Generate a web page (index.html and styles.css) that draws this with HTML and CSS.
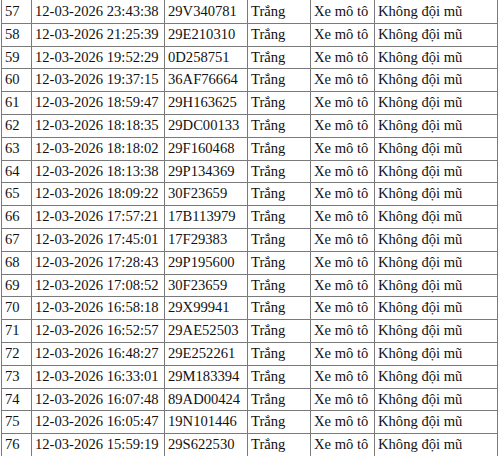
FILE: index.html
```html
<!DOCTYPE html>
<html lang="vi">
<head>
<meta charset="utf-8">
<link rel="stylesheet" href="styles.css">
</head>
<body>
<table class="list">
<colgroup>
<col class="c-no"><col class="c-time"><col class="c-plate"><col class="c-color"><col class="c-type"><col class="c-err">
</colgroup>
<tbody>
<tr><td>57</td><td>12-03-2026 23:43:38</td><td>29V340781</td><td>Trắng</td><td>Xe mô tô</td><td>Không đội mũ</td></tr>
<tr><td>58</td><td>12-03-2026 21:25:39</td><td>29E210310</td><td>Trắng</td><td>Xe mô tô</td><td>Không đội mũ</td></tr>
<tr><td>59</td><td>12-03-2026 19:52:29</td><td>0D258751</td><td>Trắng</td><td>Xe mô tô</td><td>Không đội mũ</td></tr>
<tr><td>60</td><td>12-03-2026 19:37:15</td><td>36AF76664</td><td>Trắng</td><td>Xe mô tô</td><td>Không đội mũ</td></tr>
<tr><td>61</td><td>12-03-2026 18:59:47</td><td>29H163625</td><td>Trắng</td><td>Xe mô tô</td><td>Không đội mũ</td></tr>
<tr><td>62</td><td>12-03-2026 18:18:35</td><td>29DC00133</td><td>Trắng</td><td>Xe mô tô</td><td>Không đội mũ</td></tr>
<tr><td>63</td><td>12-03-2026 18:18:02</td><td>29F160468</td><td>Trắng</td><td>Xe mô tô</td><td>Không đội mũ</td></tr>
<tr><td>64</td><td>12-03-2026 18:13:38</td><td>29P134369</td><td>Trắng</td><td>Xe mô tô</td><td>Không đội mũ</td></tr>
<tr><td>65</td><td>12-03-2026 18:09:22</td><td>30F23659</td><td>Trắng</td><td>Xe mô tô</td><td>Không đội mũ</td></tr>
<tr><td>66</td><td>12-03-2026 17:57:21</td><td>17B113979</td><td>Trắng</td><td>Xe mô tô</td><td>Không đội mũ</td></tr>
<tr><td>67</td><td>12-03-2026 17:45:01</td><td>17F29383</td><td>Trắng</td><td>Xe mô tô</td><td>Không đội mũ</td></tr>
<tr><td>68</td><td>12-03-2026 17:28:43</td><td>29P195600</td><td>Trắng</td><td>Xe mô tô</td><td>Không đội mũ</td></tr>
<tr><td>69</td><td>12-03-2026 17:08:52</td><td>30F23659</td><td>Trắng</td><td>Xe mô tô</td><td>Không đội mũ</td></tr>
<tr><td>70</td><td>12-03-2026 16:58:18</td><td>29X99941</td><td>Trắng</td><td>Xe mô tô</td><td>Không đội mũ</td></tr>
<tr><td>71</td><td>12-03-2026 16:52:57</td><td>29AE52503</td><td>Trắng</td><td>Xe mô tô</td><td>Không đội mũ</td></tr>
<tr><td>72</td><td>12-03-2026 16:48:27</td><td>29E252261</td><td>Trắng</td><td>Xe mô tô</td><td>Không đội mũ</td></tr>
<tr><td>73</td><td>12-03-2026 16:33:01</td><td>29M183394</td><td>Trắng</td><td>Xe mô tô</td><td>Không đội mũ</td></tr>
<tr><td>74</td><td>12-03-2026 16:07:48</td><td>89AD00424</td><td>Trắng</td><td>Xe mô tô</td><td>Không đội mũ</td></tr>
<tr><td>75</td><td>12-03-2026 16:05:47</td><td>19N101446</td><td>Trắng</td><td>Xe mô tô</td><td>Không đội mũ</td></tr>
<tr><td>76</td><td>12-03-2026 15:59:19</td><td>29S622530</td><td>Trắng</td><td>Xe mô tô</td><td>Không đội mũ</td></tr>
</tbody>
</table>
</body>
</html>
```
FILE: styles.css
```css
html, body {
  margin: 0;
  padding: 0;
  background: #fff;
  overflow: hidden;
}
body {
  padding-left: 1px;
}
.list {
  border-collapse: collapse;
  table-layout: fixed;
  width: 497px;
  font-family: "Times New Roman", "Liberation Serif", serif;
  font-size: 14.6px;
  color: #111;
}
.list td {
  border: 1px solid #7a7a7a;
  padding: 3px 3px;
  line-height: 15.8px;
  white-space: nowrap;
  overflow: hidden;
  text-align: left;
  vertical-align: middle;
}
.list tr:first-child td {
  border-top-color: transparent;
}
.c-no { width: 30px; }
.c-time { width: 133px; }
.c-plate { width: 83px; }
.c-color { width: 63px; }
.c-type { width: 64px; }
.c-err { width: 123px; }
```
